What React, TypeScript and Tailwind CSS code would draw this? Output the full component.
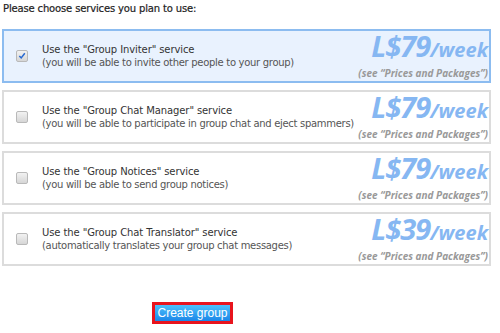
import React from "react";

const services = [
  {
    name: "Group Inviter",
    desc: "(you will be able to invite other people to your group)",
    price: "79",
    checked: true,
  },
  {
    name: "Group Chat Manager",
    desc: "(you will be able to participate in group chat and eject spammers)",
    price: "79",
    checked: false,
  },
  {
    name: "Group Notices",
    desc: "(you will be able to send group notices)",
    price: "79",
    checked: false,
  },
  {
    name: "Group Chat Translator",
    desc: "(automatically translates your group chat messages)",
    price: "39",
    checked: false,
  },
];

function Check({ checked }: { checked: boolean }) {
  return (
    <div className="w-[12px] h-[12px] border border-[#b9b9b9] rounded-[2px] bg-gradient-to-b from-[#f2f2f2] to-[#d6d6d6] flex items-center justify-center shrink-0">
      {checked && (
        <svg width="8" height="8" viewBox="0 0 8 8">
          <path d="M1.3 4 L3.2 5.9 L6.8 1.3" fill="none" stroke="#2a6bd1" strokeWidth="1.5" />
        </svg>
      )}
    </div>
  );
}

export default function App() {
  return (
    <div className="w-[500px] h-[333px] bg-white text-[#444] font-['DejaVu_Sans',sans-serif] text-[10px]">
      <div className="pl-[3px] pt-[2px] pb-[13px] text-[10px] tracking-[-0.15px] text-[#222] leading-[14px] [-webkit-text-stroke:0.2px_#222]">
        Please choose services you plan to use:
      </div>
      <div className="flex flex-col gap-[7px] pl-[2px] w-[491px]">
        {services.map((s, i) => (
          <div
            key={i}
            className={
              s.checked
                ? "h-[54px] border-2 border-[#8cbcf0] bg-[#e9f2fe] flex items-center pl-[12px] pr-[1px]"
                : "h-[54px] border-2 border-[#dcdcdc] bg-white flex items-center pl-[12px] pr-[1px]"
            }
          >
            <Check checked={s.checked} />
            <div className="ml-[14px] leading-[13px] flex-1 min-w-0 whitespace-nowrap">
              <div className="text-[#333] tracking-[-0.1px]">Use the "{s.name}" service</div>
              <div className="text-[#555] tracking-[-0.3px]">{s.desc}</div>
            </div>
            <div className="shrink-0 flex flex-col items-end whitespace-nowrap font-['Open_Sans',sans-serif] italic font-bold -mt-[2px]">
              <div className="text-[#86b7f2] leading-[28px]">
                <span className="text-[29px] tracking-[-1px]">L$</span>
                <span className="text-[29px] tracking-[-1px]">{s.price}</span>
                <span className="text-[20px]">/week</span>
              </div>
              <div className="text-[#999] text-[10px] leading-[12px]">
                (see “Prices and Packages”)
              </div>
            </div>
          </div>
        ))}
      </div>
      <div className="flex pl-[152px] pt-[36px]">
        <div className="border-[3px] border-[#e8141d]">
          <button className="h-[16px] w-[75px] bg-gradient-to-b from-[#4cc0fb] to-[#1a86e8] text-white text-[12px] leading-[16px] font-['Liberation_Sans',sans-serif]">
            Create group
          </button>
        </div>
      </div>
    </div>
  );
}
